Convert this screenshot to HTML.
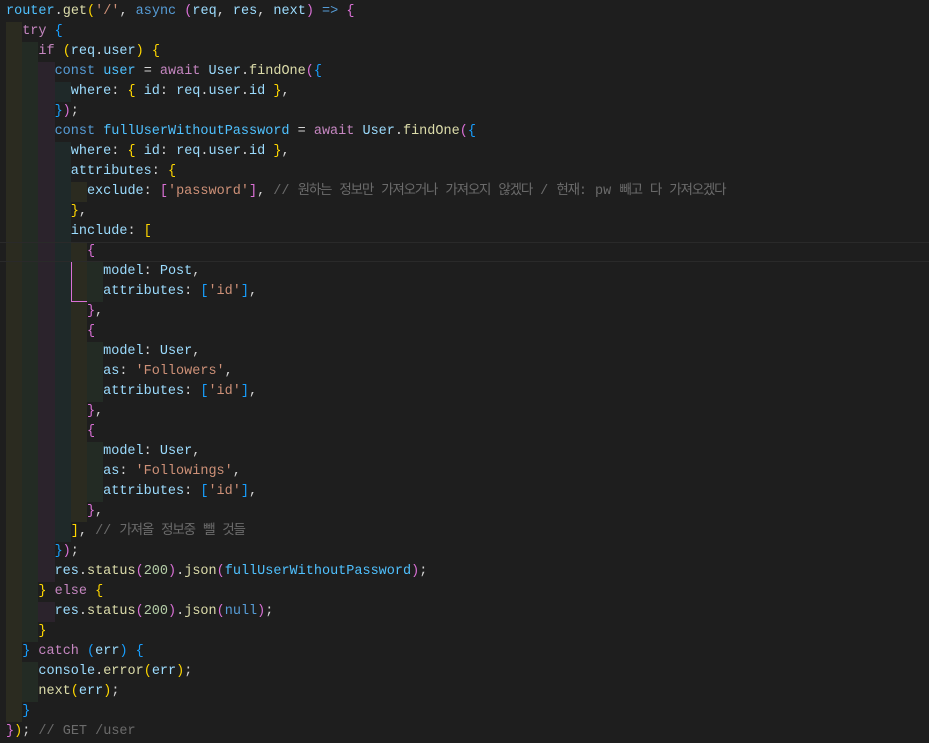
<!DOCTYPE html>
<html><head><meta charset="utf-8"><style>
html,body{margin:0;padding:0;background:#1e1e1e;width:929px;height:743px;overflow:hidden}
.c{font-family:"Liberation Mono","Noto Sans CJK KR",monospace;font-size:13.5px;color:#d4d4d4;padding-top:2px}
.l{height:20px;line-height:20px;padding-left:6px;position:relative;white-space:pre;overflow:hidden}
i{display:inline-block;width:16.2px;height:20px;vertical-align:top;font-style:normal}
.a{background:#2b2b20}.b{background:#232b24}.p{background:#2b232c}.t{background:#1f2929}
.v{color:#9cdcfe}.C{color:#4fc1ff}.f{color:#dcdcaa}.k{color:#569cd6}.x{color:#c586c0}.s{color:#ce9178}.n{color:#b5cea8}.m{color:#6b6b6b}
.y{color:#ffd700}.o{color:#da70d6}.u{color:#179fff}
.kr{font-family:"Noto Sans CJK KR",sans-serif;letter-spacing:-1.2px;line-height:1;vertical-align:baseline}
.cur{border-top:1px solid #2a2a2a;border-bottom:1px solid #2a2a2a;height:18px;line-height:18px}
</style></head><body><div class="c">
<div class="l"><span class="C">router</span>.<span class="f">get</span><span class="y">(</span><span class="s">'/'</span>, <span class="k">async</span> <span class="o">(</span><span class="v">req</span>, <span class="v">res</span>, <span class="v">next</span><span class="o">)</span> <span class="k">=&gt;</span> <span class="o">{</span></div>
<div class="l"><i class="a"></i><span class="x">try</span> <span class="u">{</span></div>
<div class="l"><i class="a"></i><i class="b"></i><span class="x">if</span> <span class="y">(</span><span class="v">req</span>.<span class="v">user</span><span class="y">)</span> <span class="y">{</span></div>
<div class="l"><i class="a"></i><i class="b"></i><i class="p"></i><span class="k">const</span> <span class="C">user</span> = <span class="x">await</span> <span class="v">User</span>.<span class="f">findOne</span><span class="o">(</span><span class="u">{</span></div>
<div class="l"><i class="a"></i><i class="b"></i><i class="p"></i><i class="t"></i><span class="v">where</span>: <span class="y">{</span> <span class="v">id</span>: <span class="v">req</span>.<span class="v">user</span>.<span class="v">id</span> <span class="y">}</span>,</div>
<div class="l"><i class="a"></i><i class="b"></i><i class="p"></i><span class="u">}</span><span class="o">)</span>;</div>
<div class="l"><i class="a"></i><i class="b"></i><i class="p"></i><span class="k">const</span> <span class="C">fullUserWithoutPassword</span> = <span class="x">await</span> <span class="v">User</span>.<span class="f">findOne</span><span class="o">(</span><span class="u">{</span></div>
<div class="l"><i class="a"></i><i class="b"></i><i class="p"></i><i class="t"></i><span class="v">where</span>: <span class="y">{</span> <span class="v">id</span>: <span class="v">req</span>.<span class="v">user</span>.<span class="v">id</span> <span class="y">}</span>,</div>
<div class="l"><i class="a"></i><i class="b"></i><i class="p"></i><i class="t"></i><span class="v">attributes</span>: <span class="y">{</span></div>
<div class="l"><i class="a"></i><i class="b"></i><i class="p"></i><i class="t"></i><i class="a"></i><span class="v">exclude</span>: <span class="o">[</span><span class="s">'password'</span><span class="o">]</span>, <span class="m">// <span class="kr">원하는</span> <span class="kr">정보만</span> <span class="kr">가져오거나</span> <span class="kr">가져오지</span> <span class="kr">않겠다</span> / <span class="kr">현재</span>: pw <span class="kr">빼고</span> <span class="kr">다</span> <span class="kr">가져오겠다</span></span></div>
<div class="l"><i class="a"></i><i class="b"></i><i class="p"></i><i class="t"></i><span class="y">}</span>,</div>
<div class="l"><i class="a"></i><i class="b"></i><i class="p"></i><i class="t"></i><span class="v">include</span>: <span class="y">[</span></div>
<div class="l cur"><i class="a" style="height:18px"></i><i class="b" style="height:18px"></i><i class="p" style="height:18px"></i><i class="t" style="height:18px"></i><i class="a" style="height:18px"></i><span class="o">{</span></div>
<div class="l"><i class="a"></i><i class="b"></i><i class="p"></i><i class="t"></i><i class="a" style="box-shadow:inset 1px 0 #da70d6"></i><i class="b"></i><span class="v">model</span>: <span class="v">Post</span>,</div>
<div class="l"><i class="a"></i><i class="b"></i><i class="p"></i><i class="t"></i><i class="a" style="box-shadow:inset 1px 0 #da70d6,inset 0 -1px #da70d6"></i><i class="b"></i><span class="v">attributes</span>: <span class="u">[</span><span class="s">'id'</span><span class="u">]</span>,</div>
<div class="l"><i class="a"></i><i class="b"></i><i class="p"></i><i class="t"></i><i class="a"></i><span class="o">}</span>,</div>
<div class="l"><i class="a"></i><i class="b"></i><i class="p"></i><i class="t"></i><i class="a"></i><span class="o">{</span></div>
<div class="l"><i class="a"></i><i class="b"></i><i class="p"></i><i class="t"></i><i class="a"></i><i class="b"></i><span class="v">model</span>: <span class="v">User</span>,</div>
<div class="l"><i class="a"></i><i class="b"></i><i class="p"></i><i class="t"></i><i class="a"></i><i class="b"></i><span class="v">as</span>: <span class="s">'Followers'</span>,</div>
<div class="l"><i class="a"></i><i class="b"></i><i class="p"></i><i class="t"></i><i class="a"></i><i class="b"></i><span class="v">attributes</span>: <span class="u">[</span><span class="s">'id'</span><span class="u">]</span>,</div>
<div class="l"><i class="a"></i><i class="b"></i><i class="p"></i><i class="t"></i><i class="a"></i><span class="o">}</span>,</div>
<div class="l"><i class="a"></i><i class="b"></i><i class="p"></i><i class="t"></i><i class="a"></i><span class="o">{</span></div>
<div class="l"><i class="a"></i><i class="b"></i><i class="p"></i><i class="t"></i><i class="a"></i><i class="b"></i><span class="v">model</span>: <span class="v">User</span>,</div>
<div class="l"><i class="a"></i><i class="b"></i><i class="p"></i><i class="t"></i><i class="a"></i><i class="b"></i><span class="v">as</span>: <span class="s">'Followings'</span>,</div>
<div class="l"><i class="a"></i><i class="b"></i><i class="p"></i><i class="t"></i><i class="a"></i><i class="b"></i><span class="v">attributes</span>: <span class="u">[</span><span class="s">'id'</span><span class="u">]</span>,</div>
<div class="l"><i class="a"></i><i class="b"></i><i class="p"></i><i class="t"></i><i class="a"></i><span class="o">}</span>,</div>
<div class="l"><i class="a"></i><i class="b"></i><i class="p"></i><i class="t"></i><span class="y">]</span>, <span class="m">// <span class="kr">가져올</span> <span class="kr">정보중</span> <span class="kr">뺄</span> <span class="kr">것들</span></span></div>
<div class="l"><i class="a"></i><i class="b"></i><i class="p"></i><span class="u">}</span><span class="o">)</span>;</div>
<div class="l"><i class="a"></i><i class="b"></i><i class="p"></i><span class="v">res</span>.<span class="f">status</span><span class="o">(</span><span class="n">200</span><span class="o">)</span>.<span class="f">json</span><span class="o">(</span><span class="C">fullUserWithoutPassword</span><span class="o">)</span>;</div>
<div class="l"><i class="a"></i><i class="b"></i><span class="y">}</span> <span class="x">else</span> <span class="y">{</span></div>
<div class="l"><i class="a"></i><i class="b"></i><i class="p"></i><span class="v">res</span>.<span class="f">status</span><span class="o">(</span><span class="n">200</span><span class="o">)</span>.<span class="f">json</span><span class="o">(</span><span class="k">null</span><span class="o">)</span>;</div>
<div class="l"><i class="a"></i><i class="b"></i><span class="y">}</span></div>
<div class="l"><i class="a"></i><span class="u">}</span> <span class="x">catch</span> <span class="u">(</span><span class="v">err</span><span class="u">)</span> <span class="u">{</span></div>
<div class="l"><i class="a"></i><i class="b"></i><span class="v">console</span>.<span class="f">error</span><span class="y">(</span><span class="v">err</span><span class="y">)</span>;</div>
<div class="l"><i class="a"></i><i class="b"></i><span class="f">next</span><span class="y">(</span><span class="v">err</span><span class="y">)</span>;</div>
<div class="l"><i class="a"></i><span class="u">}</span></div>
<div class="l"><span class="o">}</span><span class="y">)</span>; <span class="m">// GET /user</span></div>
</div></body></html>
